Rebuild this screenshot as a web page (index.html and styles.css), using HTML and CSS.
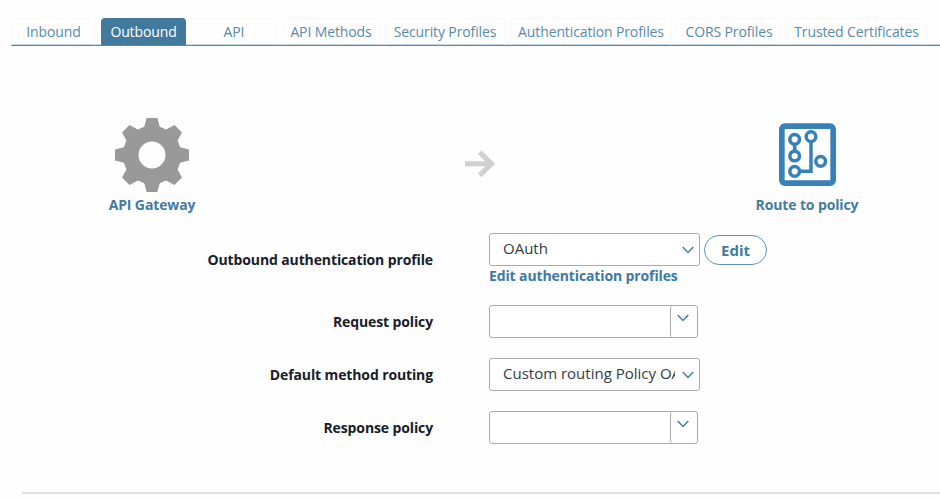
FILE: index.html
```html
<!DOCTYPE html>
<html lang="en">
<head>
<meta charset="utf-8">
<title>Outbound</title>
<link rel="stylesheet" href="styles.css">
</head>
<body>
<nav class="tabs">
  <a class="tab inbound">Inbound</a>
  <a class="tab outbound active">Outbound</a>
  <a class="tab api">API</a>
  <a class="tab methods">API Methods</a>
  <a class="tab security">Security Profiles</a>
  <a class="tab auth">Authentication Profiles</a>
  <a class="tab cors">CORS Profiles</a>
  <a class="tab certs">Trusted Certificates</a>
</nav>
<section class="flow">
  <div class="node gateway">
    <svg class="gear" viewBox="76 39 220 220"><path fill="#999" fill-rule="evenodd" d="M170 39H202L209 65L228 73L253 60L275 82L262 106L270 126L296 133V165L270 172L262 192L275 216L253 238L228 225L209 233L202 259H170L163 233L144 225L119 238L97 216L110 192L102 172L76 165V133L102 126L110 106L97 82L119 60L144 73L163 65ZM186 109A40 40 0 1 0 186 189A40 40 0 1 0 186 109Z"/></svg>
    <span class="caption">API Gateway</span>
  </div>
  <svg class="arrow" viewBox="75 45 90 84"><path fill="none" stroke="#d0d0d0" stroke-width="15" d="M75 86.500H153M119 52L155 86.500L119 121"/></svg>
  <div class="node policy">
    <svg class="route" viewBox="117 39 171 189"><g fill="none" stroke="#3781b8"><rect x="125.500" y="48.500" width="154" height="171" rx="9" stroke-width="17"/><g stroke-width="10.500"><circle cx="164" cy="88" r="14.500"/><circle cx="164" cy="138" r="14.500"/><circle cx="164" cy="184" r="14.500"/><circle cx="213" cy="80" r="14.500"/><circle cx="242" cy="154" r="14.500"/><path d="M164 103V123M213 95V184H179"/></g></g></svg>
    <span class="caption">Route to policy</span>
  </div>
</section>
<form class="form">
  <div class="row first">
    <label>Outbound authentication profile</label>
    <div class="field">
      <div class="line">
        <div class="select"><span class="value">OAuth</span><svg class="chevron" viewBox="0 0 12 8"><path d="M.7 1L6 6.500L11.300 1"/></svg></div>
        <button class="edit" type="button">Edit</button>
      </div>
      <a class="link">Edit authentication profiles</a>
    </div>
  </div>
  <div class="row">
    <label>Request policy</label>
    <div class="combo"><span class="trigger"><svg class="chevron" viewBox="0 0 12 8"><path d="M.7 1L6 6.500L11.300 1"/></svg></span></div>
  </div>
  <div class="row">
    <label>Default method routing</label>
    <div class="select"><span class="value">Custom routing Policy OAuth</span><svg class="chevron" viewBox="0 0 12 8"><path d="M.7 1L6 6.500L11.300 1"/></svg></div>
  </div>
  <div class="row">
    <label>Response policy</label>
    <div class="combo"><span class="trigger"><svg class="chevron" viewBox="0 0 12 8"><path d="M.7 1L6 6.500L11.300 1"/></svg></span></div>
  </div>
</form>
<hr class="rule">
</body>
</html>
```
FILE: styles.css
```css
* { box-sizing: border-box; }
body { margin: 0; width: 940px; height: 499px; overflow: hidden; background: #fefefe; font: 14px/20px "Open Sans", sans-serif; letter-spacing: -0.12px; color: #17202a; }
svg { display: block; flex: none; }
.tabs { display: flex; gap: 5px; height: 46px; margin-left: 11px; padding-top: 18px; border-bottom: 1px solid #518aae; box-shadow: inset 0 -1px #c3d8e4; }
.tab { flex: none; height: 27px; line-height: 26px; border: 1px solid #f8f8f8; border-bottom: 0; border-radius: 4px 4px 0 0; text-align: center; white-space: nowrap; color: #588aab; }
.tab.active { background: #417a9d; border-color: #417a9d; color: #fff; }
.inbound, .outbound { width: 85px; }
.api { width: 86px; }
.methods { width: 98px; }
.security { width: 120px; }
.auth { width: 162px; }
.cors { width: 104px; }
.certs { width: 141px; }
.flow { display: flex; align-items: flex-start; justify-content: space-between; height: 187px; padding: 72px 62px 0 82px; }
.node { display: flex; flex-direction: column; align-items: center; font-weight: 700; color: #427ca1; }
.node.gateway { width: 140px; }
.node.policy { width: 142px; padding-top: 5px; }
.gear { width: 74px; height: 74px; }
.gateway .caption { margin-top: 3px; }
.arrow { width: 30px; height: 28px; margin: 32px 0 0 1px; }
.route { width: 57px; height: 63px; }
.policy .caption { margin-top: 9px; }
.form { height: 259px; }
.row { display: grid; grid-template-columns: 433px 1fr; column-gap: 56px; align-items: center; height: 33px; margin-bottom: 20px; }
.row.first { height: 52px; align-items: start; }
.first label { padding-top: 17px; }
label { text-align: right; font-weight: 700; }
.line { display: flex; align-items: center; gap: 4px; height: 33px; }
.select { display: flex; align-items: center; width: 211px; height: 33px; padding: 0 5px 0 13px; border: 1px solid #aaa; border-radius: 3px; background: #fff; }
.value { width: 172px; margin-top: -3px; overflow: hidden; white-space: nowrap; font-size: 15px; letter-spacing: 0; color: #333b43; }
.chevron { width: 12px; height: 8px; margin-left: auto; fill: none; stroke: #417fa6; stroke-width: 1.5; }
.edit { width: 63px; height: 30px; padding: 0; border: 1px solid #5d91b1; border-radius: 15px; background: #fff; font: 700 15px/26px "Open Sans", sans-serif; color: #417ca1; }
.link { display: block; line-height: 20px; font-weight: 700; color: #3c7ba3; }
.combo { display: flex; justify-content: flex-end; width: 209px; height: 33px; border: 1px solid #aaa; border-radius: 3px; background: #fff; }
.trigger { width: 27px; padding: 8px 8px 0 6px; border-left: 1px solid #aaa; border-radius: 3px 0 0 3px; }
.rule { height: 2px; margin: 0 0 0 22px; border: 0; background: #e0e0e0; }
```
